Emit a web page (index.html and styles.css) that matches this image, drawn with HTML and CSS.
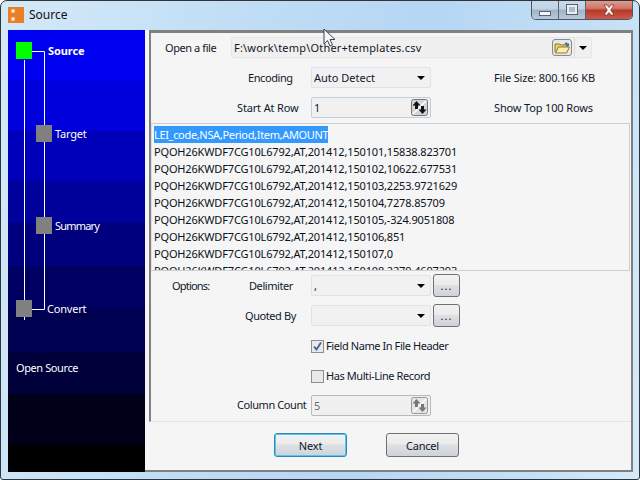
FILE: index.html
```html
<!DOCTYPE html>
<html lang="en">
<head>
<meta charset="utf-8">
<title>Source</title>
<link rel="stylesheet" href="styles.css">
</head>
<body>
<div class="window">
  <header class="titlebar">
    <div class="app-icon"><span class="app-icon-a"></span><span class="app-icon-b"></span></div>
    <span class="title">Source</span>
    <div class="caption">
      <button class="cap cap-min"><span class="min-glyph"></span></button>
      <button class="cap cap-max"><span class="max-glyph"></span></button>
      <button class="cap cap-close">
        <svg width="18" height="12" viewBox="0 0 18 12"><path d="M4 1h3l2 2.500L11 1h3l-3.300 5L14 11h-3L9 8.500 7 11H4l3.300-5z" fill="#fff" stroke="#6d2a22" stroke-width=".7"/></svg>
      </button>
    </div>
  </header>
  <div class="client">
    <nav class="wizard">
      <svg class="wires" width="137" height="442" viewBox="0 0 137 442">
        <path d="M16.500 30V290M24 21.500H36.500V279.500H24" fill="none" stroke="#fff"/>
      </svg>
      <span class="node node-on n1"></span>
      <span class="node n2"></span>
      <span class="node n3"></span>
      <span class="node n4"></span>
      <span class="step step-on s1">Source</span>
      <span class="step s2">Target</span>
      <span class="step s3">Summary</span>
      <span class="step s4">Convert</span>
      <span class="step s5">Open Source</span>
    </nav>
    <main class="panel">
      <section class="frame">
        <div class="row row-file">
          <label class="lbl lbl-file">Open a file</label>
          <div class="field field-file">
            <span class="path">F:\work\temp\Other+templates.csv</span>
            <span class="folder-btn">
              <svg width="17" height="13" viewBox="0 0 17 13">
                <path d="M1 3h5l1 1h6v7H1z" fill="#e8cf6a" stroke="#8f7a2c"/>
                <path d="M1.500 12l3-6h11l-3 6z" fill="#fbeeaa" stroke="#8f7a2c"/>
                <path d="M10 3l3-2v1.500h2V5l-2 .5V4z" fill="#3a62c4"/>
              </svg>
            </span>
            <span class="file-drop"><i class="arrow"></i></span>
          </div>
        </div>
        <div class="row row-enc">
          <label class="lbl lbl-enc">Encoding</label>
          <div class="field combo"><span>Auto Detect</span><i class="arrow"></i></div>
          <span class="info">File Size: 800.166 KB</span>
        </div>
        <div class="row row-start">
          <label class="lbl lbl-start">Start At Row</label>
          <div class="field combo spin-field"><span>1</span>
            <span class="spin">
              <svg width="17" height="17" viewBox="0 0 17 17">
                <rect x=".5" y=".5" width="16" height="16" rx="2" fill="#d4d4d4" stroke="#777"/>
                <path d="M2 15L15 2" stroke="#fff" stroke-width="1.500"/>
                <path d="M5.500 2L9.500 6.500H7V10H4V6.500H1.500zM11.500 15L7.500 10.500H10V7h3v3.500h2.500z" fill="#111"/>
              </svg>
            </span>
          </div>
          <span class="info">Show Top 100 Rows</span>
        </div>
        <div class="preview">
          <div class="line"><span class="sel">LEI_code,NSA,Period,Item,AMOUNT</span></div>
          <div class="line">PQOH26KWDF7CG10L6792,AT,201412,150101,15838.823701</div>
          <div class="line">PQOH26KWDF7CG10L6792,AT,201412,150102,10622.677531</div>
          <div class="line">PQOH26KWDF7CG10L6792,AT,201412,150103,2253.9721629</div>
          <div class="line">PQOH26KWDF7CG10L6792,AT,201412,150104,7278.85709</div>
          <div class="line">PQOH26KWDF7CG10L6792,AT,201412,150105,-324.9051808</div>
          <div class="line">PQOH26KWDF7CG10L6792,AT,201412,150106,851</div>
          <div class="line">PQOH26KWDF7CG10L6792,AT,201412,150107,0</div>
          <div class="line">PQOH26KWDF7CG10L6792,AT,201412,150108,2279.4697293</div>
        </div>
        <div class="row row-delim">
          <label class="lbl lbl-opt">Options:</label>
          <label class="lbl lbl-delim">Delimiter</label>
          <div class="field combo"><span>,</span><i class="arrow"></i></div>
          <button class="more">...</button>
        </div>
        <div class="row row-quote">
          <label class="lbl lbl-quote">Quoted By</label>
          <div class="field combo"><span></span><i class="arrow"></i></div>
          <button class="more">...</button>
        </div>
        <div class="row row-check1">
          <span class="check">
            <svg width="9" height="9" viewBox="0 0 9 9"><path d="M1 4.500l2.500 3L8 .5" fill="none" stroke="#3f5f9f" stroke-width="1.800"/></svg>
          </span>
          <span class="check-text">Field Name In File Header</span>
        </div>
        <div class="row row-check2">
          <span class="check"></span>
          <span class="check-text">Has Multi-Line Record</span>
        </div>
        <div class="row row-count">
          <label class="lbl lbl-count">Column Count</label>
          <div class="field combo field-off spin-field"><span>5</span>
            <span class="spin">
              <svg width="17" height="17" viewBox="0 0 17 17">
                <rect x=".5" y=".5" width="16" height="16" rx="2" fill="#e4e4e4" stroke="#999"/>
                <path d="M2 15L15 2" stroke="#fff" stroke-width="1.500"/>
                <path d="M5.500 2L9.500 6.500H7V10H4V6.500H1.500zM11.500 15L7.500 10.500H10V7h3v3.500h2.500z" fill="#777"/>
              </svg>
            </span>
          </div>
        </div>
      </section>
      <footer class="actions">
        <button class="btn btn-default">Next</button>
        <button class="btn">Cancel</button>
      </footer>
    </main>
  </div>
  <svg class="pointer" width="14" height="20" viewBox="0 0 14 20">
    <path d="M1 1v15l3.500-3.500L7 18l2.500-1L7 11.500h5z" fill="#f4f6f8" stroke="#3a4450"/>
  </svg>
</div>
</body>
</html>
```
FILE: styles.css
```css
* { box-sizing: border-box; }
html, body { margin: 0; padding: 0; }
body {
  width: 640px;
  height: 480px;
  overflow: hidden;
  font-family: "Noto Sans", "DejaVu Sans", sans-serif;
  font-size: 11px;
  color: #10182a;
}
.window {
  position: relative;
  width: 640px;
  height: 480px;
  display: flex;
  flex-direction: column;
  border: 1px solid #30353c;
  border-radius: 7px 7px 3px 3px;
  background: linear-gradient(100deg, #d4e9f8 0, #c0ddf5 35%, #b5d6f4 60%, #c4e0f6 85%, #d6ebf9 100%);
  overflow: hidden;
}
.titlebar {
  height: 29px;
  flex: none;
  display: flex;
  align-items: flex-start;
  padding: 6px 0 0 7px;
}
.app-icon {
  width: 16px;
  height: 16px;
  background: #ea7f24;
  position: relative;
}
.app-icon-a, .app-icon-b {
  position: absolute;
  left: 3px;
  width: 4px;
  height: 4px;
  background: #fbe2c8;
  border-radius: 2px;
}
.app-icon-a { top: 2px; }
.app-icon-b { top: 10px; }
.title {
  margin-left: 5px;
  font-size: 12px;
  line-height: 16px;
  color: #101010;
}
.caption {
  position: absolute;
  top: 0;
  right: 6px;
  display: flex;
  height: 19px;
  border: 1px solid #4c5763;
  border-top: 0;
  border-radius: 0 0 5px 5px;
  overflow: hidden;
}
.cap {
  padding: 0;
  border: 0;
  height: 18px;
  display: flex;
  align-items: center;
  justify-content: center;
  background: linear-gradient(#c6d8e8 0, #c2d4e4 45%, #9fb3c6 50%, #b6cada 100%);
}
.cap-min { width: 27px; border-right: 1px solid #57636f; }
.cap-max { width: 27px; border-right: 1px solid #57636f; }
.cap-close {
  width: 46px;
  background: linear-gradient(#dc9c8e 0, #d17768 40%, #b8392a 52%, #cc5a4a 100%);
}
.min-glyph {
  width: 12px;
  height: 5px;
  margin-top: 6px;
  background: #f2f6fa;
  border: 1px solid #58646f;
}
.max-glyph {
  width: 12px;
  height: 11px;
  margin-top: -2px;
  background: #aabccc;
  border: 1px solid #58646f;
  box-shadow: inset 0 0 0 2px #e8eef4;
}
.client {
  flex: 1;
  display: flex;
  margin: 0 6px 7px 7px;
  min-height: 0;
}
.wizard {
  position: relative;
  flex: none;
  width: 137px;
  background: linear-gradient(#0000f0 0 51px, #0000dc 51px 101px, #0000bb 101px 151px, #00009a 151px 193px, #00007e 193px 236px, #000062 236px 279px, #000050 279px 322px, #00003a 322px 364px, #000018 364px 415px, #000 415px);
}
.wires { position: absolute; top: 0; left: 0; }
.node {
  position: absolute;
  width: 16px;
  height: 17px;
  background: #808080;
}
.node-on { background: #00ff00; }
.n1 { left: 8px; top: 12px; }
.n2 { left: 28px; top: 95px; }
.n3 { left: 28px; top: 187px; }
.n4 { left: 8px; top: 270px; }
.step {
  position: absolute;
  color: #fff;
  line-height: 14px;
  white-space: nowrap;
  letter-spacing: -.2px;
}
.step-on { font-weight: 700; letter-spacing: -.1px; }
.s1 { left: 40px; top: 14px; }
.s2 { left: 47px; top: 97px; }
.s3 { left: 47px; top: 189px; letter-spacing: -.8px; }
.s4 { left: 39px; top: 272px; }
.s5 { left: 8px; top: 331px; letter-spacing: -.4px; }
.panel {
  flex: 1;
  min-width: 0;
  padding-left: 4px;
  display: flex;
  flex-direction: column;
  background: #f5f5f5;
  border-right: 2px solid #808080;
  border-bottom: 2px solid #808080;
}
.frame {
  height: 392px;
  flex: none;
  position: relative;
  border-left: 2px solid #808080;
  border-bottom: 1px solid #e4e4e4;
  border-top: 3px solid #808080;
  display: flex;
  flex-direction: column;
  padding-top: 4px;
}
.row {
  display: flex;
  align-items: center;
  flex: none;
  position: relative;
}
.lbl, .check-text { white-space: nowrap; line-height: 14px; letter-spacing: -.42px; }
.info { white-space: nowrap; line-height: 14px; letter-spacing: -.15px; }
.row-file { height: 21px; margin-bottom: 9px; padding-left: 14px; }
.row-enc { height: 21px; margin-bottom: 9px; padding-left: 97px; }
.row-start { height: 21px; margin-bottom: 5px; padding-left: 86px; }
.lbl-file { width: 66px; }
.lbl-enc { width: 63px; }
.lbl-start { width: 74px; letter-spacing: -.15px; }
.field {
  height: 21px;
  background: #f1f1f1;
  border: 1px solid #dbe4ec;
  border-radius: 2px;
  display: flex;
  align-items: center;
  padding-left: 2px;
}
.field-file { width: 361px; background: #f0f0f0; border-color: #e6e6e6; }
.path { flex: 1; letter-spacing: .2px; }
.folder-btn {
  width: 20px;
  height: 17px;
  margin-right: 2px;
  display: flex;
  align-items: center;
  justify-content: center;
  background: #e8e8e8;
  border: 1px solid #8a8a8a;
  border-radius: 3px;
}
.file-drop {
  width: 17px;
  height: 19px;
  display: flex;
  align-items: center;
  justify-content: center;
  border-left: 1px solid #dcdcdc;
}
.arrow {
  width: 0;
  height: 0;
  border-left: 4px solid transparent;
  border-right: 4px solid transparent;
  border-top: 4px solid #000;
}
.combo {
  width: 120px;
  justify-content: space-between;
  padding: 0 2px 0 2px;
}
.combo .arrow { margin-right: 3px; }
.spin-field { border-color: #bcd0de; }
.spin { display: flex; margin-right: 0; }
.info { margin-left: 63px; }
.preview {
  height: 148px;
  flex: none;
  margin-right: 1px;
  overflow: hidden;
  padding: 2px 2px;
  background: #f5f5f5;
  border: 1px solid #cfcfcf;
  border-left: 1px solid #e0e0e0;
  margin-bottom: 4px;
}
.line { height: 17px; line-height: 17px; white-space: nowrap; color: #0a1020; letter-spacing: -.16px; }
.sel { display: inline-block; background: #3399ff; color: #fff; letter-spacing: -.33px; }
.row-delim { height: 21px; margin-bottom: 9px; padding-left: 21px; }
.lbl-opt { width: 77px; letter-spacing: -.8px; }
.lbl-delim { width: 62px; }
.row-quote { height: 21px; margin-bottom: 13px; padding-left: 94px; }
.lbl-quote { width: 66px; }
.more {
  width: 27px;
  height: 23px;
  margin-left: 2px;
  padding: 0 0 1px;
  border: 1px solid #707070;
  border-radius: 3px;
  background: linear-gradient(#f2f2f2 0, #ebebeb 45%, #dde0e4 50%, #cfd3d8 100%);
  font: 11px "Noto Sans", sans-serif;
  letter-spacing: 1px;
  color: #10182a;
}
.row-check1, .row-check2 { height: 14px; padding-left: 160px; gap: 2px; }
.row-check1 { margin-bottom: 16px; }
.row-check2 { margin-bottom: 11px; }
.check {
  width: 13px;
  height: 13px;
  background: #e8e8e8;
  border: 1px solid #8e8f8f;
  display: flex;
  align-items: center;
  justify-content: center;
}
.row-count { height: 22px; padding-left: 86px; }
.lbl-count { width: 74px; }
.field-off {
  background: #f0f0f0;
  border-color: #b9b9b9;
  color: #6d6d6d;
}
.actions {
  flex: 1;
  display: flex;
  justify-content: flex-start;
  gap: 39px;
  padding: 11px 0 0 125px;
}
.btn {
  width: 73px;
  height: 24px;
  padding: 0;
  border: 1px solid #707070;
  border-radius: 3px;
  background: linear-gradient(#f2f2f2 0, #ebebeb 45%, #dde0e4 50%, #cfd3d8 100%);
  font: 11px "Noto Sans", sans-serif;
  letter-spacing: -.2px;
  color: #10182a;
}
.btn-default {
  border-color: #3c7fb1;
  box-shadow: inset 0 0 0 1px #48d0f4;
}
.pointer { position: absolute; left: 322px; top: 27px; }
```
